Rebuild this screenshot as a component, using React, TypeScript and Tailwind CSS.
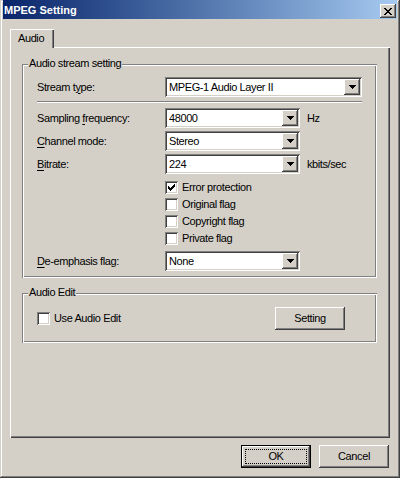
import React from "react";

const sunken =
  "shadow-[inset_1px_1px_0_#808080,inset_-1px_-1px_0_#ffffff,inset_2px_2px_0_#404040,inset_-2px_-2px_0_#d4d0c8]";
const raised =
  "shadow-[inset_-1px_-1px_0_#404040,inset_1px_1px_0_#ffffff,inset_-2px_-2px_0_#808080,inset_2px_2px_0_#d4d0c8]";
const etched =
  "shadow-[inset_1px_1px_0_#808080,inset_-1px_-1px_0_#ffffff,inset_2px_2px_0_#ffffff,inset_-2px_-2px_0_#808080]";

const Arrow = () => (
  <svg width="7" height="4" viewBox="0 0 7 4" shapeRendering="crispEdges">
    <rect x="0" y="0" width="7" height="1" fill="#000" />
    <rect x="1" y="1" width="5" height="1" fill="#000" />
    <rect x="2" y="2" width="3" height="1" fill="#000" />
    <rect x="3" y="3" width="1" height="1" fill="#000" />
  </svg>
);

const Combo = ({ value, width }: { value: string; width: string }) => (
  <div className={`${width} h-[20px] bg-white ${sunken} flex items-center pl-[4px] pr-[2px]`}>
    <span className="flex-1 truncate">{value}</span>
    <div className={`w-[16px] h-[16px] bg-[#d4d0c8] ${raised} flex items-center justify-center`}>
      <Arrow />
    </div>
  </div>
);

const checkPixels = [
  [6, 0, 1], [5, 1, 2], [0, 2, 1], [4, 2, 3], [0, 3, 2], [3, 3, 3], [0, 4, 5], [1, 5, 3], [2, 6, 1],
];

const Checkbox = ({ label, checked }: { label: string; checked?: boolean }) => (
  <div className="h-[17px] flex items-center">
    <div className={`w-[13px] h-[13px] bg-white ${sunken} flex items-center justify-center`}>
      {checked && (
        <svg width="7" height="7" viewBox="0 0 7 7" shapeRendering="crispEdges">
          {checkPixels.map(([x, y, w], i) => (
            <rect key={i} x={x} y={y} width={w} height="1" fill="#000" />
          ))}
        </svg>
      )}
    </div>
    <span className="ml-[4px]">{label}</span>
  </div>
);

const Label = ({ pre, u, post }: { pre?: string; u: string; post: string }) => (
  <span className="w-[128px] shrink-0">
    {pre}
    <span className="underline underline-offset-[2px]">{u}</span>
    {post}
  </span>
);

const Group = ({ title, className, children }: { title: string; className: string; children: React.ReactNode }) => (
  <div className={`relative w-[355px] ${etched} ${className}`}>
    <span className="absolute left-[6px] -top-[7px] bg-[#d4d0c8] px-[1px] leading-[13px]">{title}</span>
    {children}
  </div>
);

const Button = ({ children, isDefault }: { children: React.ReactNode; isDefault?: boolean }) =>
  isDefault ? (
    <div className="w-[70px] h-[23px] border border-black bg-[#d4d0c8]">
      <div className={`w-full h-full ${raised} p-[3px]`}>
        <div className="w-full h-full border border-dotted border-black flex items-center justify-center">
          {children}
        </div>
      </div>
    </div>
  ) : (
    <div className={`w-[70px] h-[23px] bg-[#d4d0c8] ${raised} flex items-center justify-center`}>{children}</div>
  );

export default function App() {
  return (
    <div
      className={`w-[400px] h-[478px] overflow-hidden bg-[#d4d0c8] px-[3px] flex flex-col text-[11px] tracking-[-0.4px] text-black font-['Liberation_Sans',Arial,sans-serif] shadow-[inset_-1px_-1px_0_#404040,inset_1px_1px_0_#d4d0c8,inset_-2px_-2px_0_#808080,inset_2px_2px_0_#ffffff]`}
    >
      {/* Title bar */}
      <div className="h-[19px] shrink-0 bg-linear-to-r from-[#0a246a] to-[#a6caf0] flex items-end pl-[1px] pr-[1px] pb-[1px]">
        <span className="flex-1 text-white font-bold tracking-[0px] leading-[15px]">MPEG Setting</span>
        <div className={`w-[16px] h-[14px] bg-[#d4d0c8] ${raised} flex items-center justify-center`}>
          <svg width="8" height="7" viewBox="0 0 8 7" shapeRendering="crispEdges">
            {[0, 1, 2, 3, 4, 5, 6].map((i) => (
              <g key={i}>
                <rect x={i} y={i} width="2" height="1" fill="#000" />
                <rect x={6 - i} y={i} width="2" height="1" fill="#000" />
              </g>
            ))}
          </svg>
        </div>
      </div>

      <div className="px-[7px] flex flex-col">
        {/* Tab */}
        <div className="mt-[10px] flex">
          <div className="relative z-10 -mb-px w-[44px] h-[19px] bg-[#d4d0c8] shadow-[inset_1px_1px_0_#ffffff,inset_-1px_0_0_#404040,inset_-2px_0_0_#808080] flex items-center pl-[8px]">
            Audio
          </div>
        </div>

        {/* Panel */}
        <div className="h-[391px] pt-[17px] pl-[12px] shadow-[inset_1px_1px_0_#ffffff,inset_-1px_-1px_0_#404040,inset_-2px_-2px_0_#808080]">
          <Group title="Audio stream setting" className="pt-[13px] pb-[7px] px-[15px]">
            <div className="flex items-center">
              <Label pre="Stream t" u="y" post="pe:" />
              <Combo value="MPEG-1 Audio Layer II" width="w-[197px]" />
            </div>
            <div className="mt-[4px] h-[2px] border-t border-[#808080] border-b border-b-white" />
            <div className="mt-[5px] flex flex-col gap-[3px]">
              <div className="flex items-center">
                <Label pre="Sampling " u="f" post="requency:" />
                <Combo value="48000" width="w-[135px]" />
                <span className="ml-[7px]">Hz</span>
              </div>
              <div className="flex items-center">
                <Label u="C" post="hannel mode:" />
                <Combo value="Stereo" width="w-[135px]" />
              </div>
              <div className="flex items-center">
                <Label u="B" post="itrate:" />
                <Combo value="224" width="w-[135px]" />
                <span className="ml-[7px]">kbits/sec</span>
              </div>
            </div>
            <div className="mt-[5px] pl-[128px] flex flex-col">
              <Checkbox label="Error protection" checked />
              <Checkbox label="Original flag" />
              <Checkbox label="Copyright flag" />
              <Checkbox label="Private flag" />
            </div>
            <div className="mt-[4px] flex items-center">
              <Label u="D" post="e-emphasis flag:" />
              <Combo value="None" width="w-[135px]" />
            </div>
          </Group>

          <Group title="Audio Edit" className="mt-[15px] pt-[14px] pb-[13px] pl-[15px] pr-[32px]">
            <div className="flex items-center justify-between">
              <div className="h-[23px] flex items-center">
                <Checkbox label="Use Audio Edit" />
              </div>
              <Button>Setting</Button>
            </div>
          </Group>
        </div>

        {/* Dialog buttons */}
        <div className="mt-[7px] flex justify-end gap-[8px] pr-[1px]">
          <Button isDefault>OK</Button>
          <Button>Cancel</Button>
        </div>
      </div>
    </div>
  );
}
